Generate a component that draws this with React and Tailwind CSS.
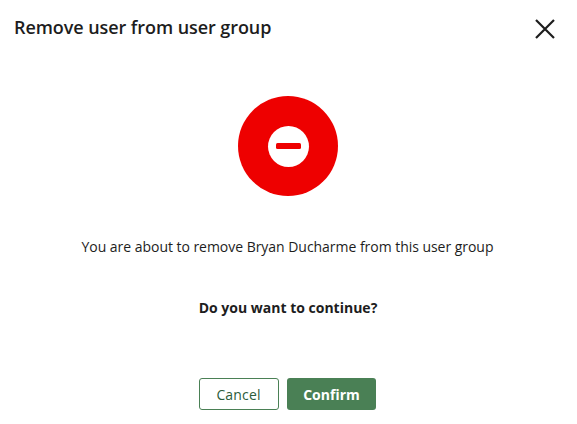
export default function App() {
  return (
    <div className="flex h-[424px] w-[576px] flex-col bg-white font-['Open_Sans',sans-serif] text-[#1d1d1d]">
      <div className="flex items-start justify-between pl-[14px] pr-[19px] pt-[15px]">
        <h1 className="text-[18px] font-semibold leading-[25px] tracking-[-0.07px]">Remove user from user group</h1>
        <button className="mt-[2px] text-[#1d1d1d]">
          <svg width="24" height="24" viewBox="0 0 24 24" fill="none" stroke="currentColor" strokeWidth="2.2">
            <path d="M3 3 L21 21 M21 3 L3 21" />
          </svg>
        </button>
      </div>

      <div className="mt-[55px] flex justify-center">
        <div className="flex h-[100px] w-[100px] items-center justify-center rounded-full bg-[#ee0000]">
          <div className="flex h-[41px] w-[41px] items-center justify-center rounded-full bg-white">
            <div className="h-[6px] w-[25px] rounded-[1.5px] bg-[#ee0000]" />
          </div>
        </div>
      </div>

      <p className="mt-[41px] pr-[1px] text-center text-[14px] leading-[20px] tracking-[-0.035px]">
        You are about to remove Bryan Ducharme from this user group
      </p>
      <p className="mt-[41px] text-center text-[14px] font-bold leading-[20px]">Do you want to continue?</p>

      <div className="mt-[60px] flex justify-center gap-[8px] pr-[2px]">
        <button className="h-[32px] w-[80px] rounded-[3px] border border-[#4a8055] bg-white text-[14px] font-medium tracking-[0.15px] text-[#2b5c3a]">
          Cancel
        </button>
        <button className="h-[32px] w-[89px] rounded-[3px] bg-[#4a8055] pl-[1px] text-[14px] font-bold text-white">
          Confirm
        </button>
      </div>
    </div>
  );
}
